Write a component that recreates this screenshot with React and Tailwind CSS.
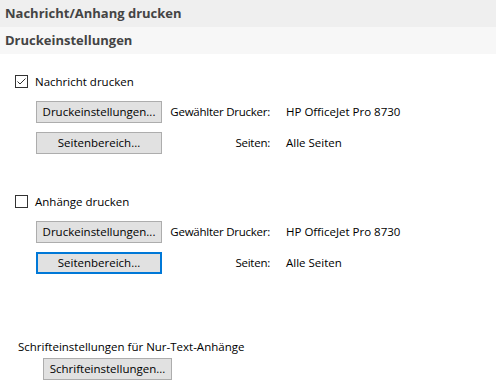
import React from "react";

const FONT = { fontFamily: '"Segoe UI", "Open Sans", "Noto Sans", sans-serif' };

function CheckBox({ checked, label }) {
  return (
    <div className="flex items-center h-[13px] ml-[15px]">
      <span className="w-[13px] h-[13px] border border-[#333333] bg-white flex items-center justify-center">
        {checked && (
          <svg width="11" height="11" viewBox="0 0 11 11">
            <path d="M1.5 5.5 L4 8 L9.5 2.5" fill="none" stroke="#333333" strokeWidth="1" />
          </svg>
        )}
      </span>
      <span className="ml-[7px] text-[11.5px] text-black leading-none whitespace-nowrap">{label}</span>
    </div>
  );
}

function Btn({ children, focused, className = "" }) {
  return (
    <button
      className={
        "h-[22px] bg-[#e1e1e1] text-[11.5px] text-black leading-none whitespace-nowrap flex items-center justify-center " +
        (focused ? "border-2 border-[#0078d7] " : "border border-[#adadad] ") +
        className
      }
    >
      {children}
    </button>
  );
}

function Row({ btn, label, value, focused }) {
  return (
    <div className="flex items-center ml-[36px] h-[22px]">
      <Btn focused={focused} className="w-[126px] shrink-0">{btn}</Btn>
      <span className="w-[108px] shrink-0 text-right text-[11.5px] tracking-[-0.25px] text-black whitespace-nowrap">{label}</span>
      <span className="ml-[16px] text-[11.5px] text-black whitespace-nowrap">{value}</span>
    </div>
  );
}

function PrintSection({ checked, label, focused }) {
  return (
    <div>
      <CheckBox checked={checked} label={label} />
      <div className="mt-[13px] flex flex-col gap-[9px]">
        <Row btn="Druckeinstellungen..." label="Gewählter Drucker:" value="HP OfficeJet Pro 8730" />
        <Row btn="Seitenbereich..." label="Seiten:" value="Alle Seiten" focused={focused} />
      </div>
    </div>
  );
}

export default function App() {
  return (
    <div className="w-[496px] h-[388px] bg-white overflow-hidden" style={FONT}>
      <div className="h-[27px] bg-[#efefef] px-[5px] flex items-center text-[13px] font-bold text-[#444444]">
        Nachricht/Anhang drucken
      </div>
      <div className="h-[27px] bg-[#f7f7f7] px-[5px] flex items-center text-[13px] font-bold text-[#444444]">
        Druckeinstellungen
      </div>

      <div className="mt-[21px]">
        <PrintSection checked label="Nachricht drucken" />
      </div>
      <div className="mt-[41px]">
        <PrintSection label="Anhänge drucken" focused />
      </div>

      <div className="mt-[65px] ml-[18px] text-[11.5px] text-black leading-[16px] whitespace-nowrap">
        Schrifteinstellungen für Nur-Text-Anhänge
      </div>
      <div className="mt-[3px] ml-[43px]">
        <Btn className="w-[129px]">Schrifteinstellungen...</Btn>
      </div>
    </div>
  );
}
